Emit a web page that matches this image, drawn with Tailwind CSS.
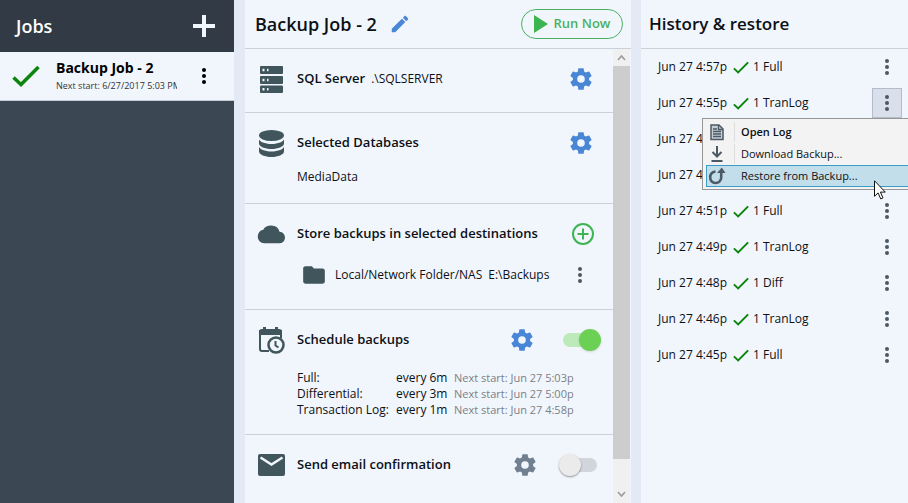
<!DOCTYPE html>
<html lang="en">
<head>
    <meta charset="UTF-8">
    <meta name="viewport" content="width=device-width, initial-scale=1.0">
    <title>Backup Job - 2</title>
    <script src="https://cdn.jsdelivr.net/npm/@tailwindcss/browser@4"></script>
</head>
<body class="flex h-screen overflow-hidden bg-[#e3e9f5] font-['Open_Sans','Noto_Sans',sans-serif] text-[12px] text-[#0c1014]">
    <!-- Shared icons -->
    <svg class="hidden" aria-hidden="true">
        <symbol id="gear" viewBox="0 0 24 24">
            <path fill="currentColor" d="M12 15.5A3.5 3.5 0 0 1 8.500 12 3.500 3.500 0 0 1 12 8.500a3.500 3.500 0 0 1 3.500 3.500 3.500 3.500 0 0 1-3.500 3.500m7.430-2.530c.04-.32.070-.64.070-.97s-.03-.66-.07-1l2.110-1.630c.19-.15.240-.42.120-.64l-2-3.460c-.12-.22-.39-.31-.61-.22l-2.490 1c-.52-.39-1.060-.73-1.690-.98l-.37-2.650A.506.506 0 0 0 14 2h-4c-.25 0-.46.180-.5.420l-.37 2.650c-.63.250-1.170.590-1.690.980l-2.490-1c-.22-.09-.49 0-.61.220l-2 3.460c-.13.220-.07.490.120.640L4.570 11c-.04.340-.07.670-.07 1s.03.650.070.970l-2.110 1.660c-.19.150-.25.420-.12.640l2 3.460c.12.220.390.300.610.220l2.490-1.010c.52.400 1.060.740 1.690.990l.37 2.650c.04.240.250.420.500.420h4c.25 0 .46-.18.500-.42l.37-2.650c.63-.26 1.170-.59 1.690-.99l2.490 1.010c.22.080.490 0 .61-.22l2-3.460c.12-.22.070-.49-.12-.64z"/>
        </symbol>
        <symbol id="dots" viewBox="0 0 6 18">
            <g fill="currentColor"><circle cx="3" cy="3" r="2"/><circle cx="3" cy="9" r="2"/><circle cx="3" cy="15" r="2"/></g>
        </symbol>
        <symbol id="check" viewBox="0 0 28 22">
            <path d="M1.500 12.500l7.500 7L26.500 2" fill="none" stroke="currentColor" stroke-width="3.500"/>
        </symbol>
    </svg>

    <!-- Sidebar -->
    <aside class="flex w-[234px] shrink-0 flex-col bg-[#3b4854] text-white">
        <header class="flex h-13 items-center justify-between bg-[#323a46] pr-[18px] pl-4">
            <h1 class="text-[18px] font-semibold">Jobs</h1>
            <button aria-label="Add job" class="size-6">
                <svg class="size-6" viewBox="0 0 24 24"><path d="M12 1v22M1 12h22" stroke="#f0f6fd" stroke-width="4"/></svg>
            </button>
        </header>
        <div class="flex h-[49px] items-center border-b border-[#c3cad3] bg-[#f1f6fd] pr-[27px] pl-3 text-black">
            <svg class="h-[22px] w-7 shrink-0 text-[#0b850b]"><use href="#check"/></svg>
            <a href="#" class="ml-4 w-[121px] overflow-hidden">
                <span class="block text-[14px] leading-4 font-bold">Backup Job - 2</span>
                <span class="mt-1 block text-[9px] leading-3 whitespace-nowrap text-[#333]">Next start: 6/27/2017 5:03 PM</span>
            </a>
            <button aria-label="Job menu" class="ml-auto"><svg class="h-[18px] w-[6px]"><use href="#dots"/></svg></button>
        </div>
    </aside>

    <!-- Job details -->
    <main class="mx-[11px] mr-[10px] flex min-w-0 flex-1 flex-col bg-[#f1f6fd]">
        <header class="flex h-[49px] shrink-0 items-center border-b border-[#cbd1da] pr-2 pl-[10px]">
            <h2 class="text-[18px] font-semibold">Backup Job - 2</h2>
            <button aria-label="Rename job" class="ml-3">
                <svg class="size-[22px]" viewBox="0 0 24 24"><path fill="#4a86d6" d="M20.710 7.040c.39-.39.390-1.040 0-1.410l-2.340-2.340c-.37-.39-1.020-.39-1.410 0l-1.840 1.830 3.750 3.750M3 17.250V21h3.750L17.810 9.930l-3.750-3.750z"/></svg>
            </button>
            <button class="ml-auto flex h-[30px] w-[102px] items-center justify-center gap-[6px] rounded-full border border-[#4bb062] text-[13px] font-semibold text-[#4bb062]">
                <svg class="h-[18px] w-[14px]" viewBox="0 0 14 18"><path d="M0 0l14 9-14 9z" fill="#3cb450"/></svg>
                Run Now
            </button>
        </header>

        <div class="flex min-h-0 flex-1">
            <div class="min-w-0 flex-1 overflow-hidden">
                <section class="border-b border-[#cbd1da] pt-4 pr-[19px] pb-[19px] pl-3">
                    <div class="flex h-7 items-center">
                        <svg class="size-7 shrink-0" viewBox="0 0 28 28"><g fill="#40555c"><rect x="3" y="1" width="23" height="8" rx="1"/><rect x="3" y="11" width="23" height="8" rx="1"/><rect x="3" y="20.500" width="23" height="7.500" rx="1"/></g><path d="M5.500 5h2m2.500 0h1.500M5.500 15h2m2.500 0h1.500M5.500 24.300h2m2.500 0h1.500" stroke="#f1f6fd" stroke-width="2.500"/></svg>
                        <h3 class="ml-3 text-[13px] font-semibold">SQL Server</h3>
                        <span class="ml-[6px]">.\SQLSERVER</span>
                        <button aria-label="SQL Server settings" class="ml-auto text-[#4a86d6]"><svg class="size-[26px]"><use href="#gear"/></svg></button>
                    </div>
                </section>

                <section class="border-b border-[#cbd1da] pt-4 pr-[19px] pb-4 pl-3">
                    <div class="flex h-7 items-center">
                        <svg class="size-7 shrink-0" viewBox="0 0 28 28"><g fill="#40555c"><ellipse cx="14.500" cy="6.500" rx="12.500" ry="5.500"/><path d="M2 10C2 12.500 8 15 14.500 15S27 12.500 27 10v4.500c0 3-6 5.500-12.500 5.500S2 17.500 2 14.500z"/><path d="M2 17.500c0 2.500 6 5 12.500 5s12.500-2.500 12.500-5v5c0 3-6 5.500-12.500 5.500S2 25.500 2 22.500z"/></g></svg>
                        <h3 class="ml-3 text-[13px] font-semibold">Selected Databases</h3>
                        <button aria-label="Database settings" class="ml-auto text-[#4a86d6]"><svg class="size-[26px]"><use href="#gear"/></svg></button>
                    </div>
                    <p class="mt-[10px] ml-10 leading-5">MediaData</p>
                </section>

                <section class="border-b border-[#cbd1da] pt-4 pr-[17px] pb-5 pl-3">
                    <div class="flex h-7 items-center">
                        <svg class="size-7 shrink-0" viewBox="0 0 24 24"><path fill="#40555c" d="M19.350 10.030A7.490 7.490 0 0 0 12 4.800C9.110 4.800 6.600 5.940 5.350 8.330A6.004 6.004 0 0 0 .700 14a5.500 5.500 0 0 0 5.500 6h12.800a4.900 4.900 0 0 0 5-5c0-2.640-2.050-4.780-4.650-4.970"/></svg>
                        <h3 class="ml-3 text-[13px] font-semibold">Store backups in selected destinations</h3>
                        <button aria-label="Add destination" class="ml-auto"><svg class="size-[26px]" viewBox="0 0 26 26"><g fill="none" stroke="#3fb455" stroke-width="2"><circle cx="13" cy="13" r="10"/><path d="M13 7.500v11M7.500 13h11"/></g></svg></button>
                    </div>
                    <div class="mt-[13px] ml-11 flex h-7 items-center">
                        <svg class="size-[26px] shrink-0" viewBox="0 0 24 24"><path fill="#40555c" d="M10 4H4c-1.110 0-2 .89-2 2v12a2 2 0 0 0 2 2h16a2 2 0 0 0 2-2V8c0-1.110-.9-2-2-2h-8z"/></svg>
                        <span class="ml-2">Local/Network Folder/NAS</span>
                        <span class="ml-[6px]">E:\Backups</span>
                        <button aria-label="Destination menu" class="mr-[13px] ml-auto text-[#4d5863]"><svg class="h-[18px] w-[6px]"><use href="#dots"/></svg></button>
                    </div>
                </section>

                <section class="border-b border-[#cbd1da] pt-4 pr-3 pb-4 pl-3">
                    <div class="flex h-7 items-center">
                        <svg class="size-7 shrink-0" viewBox="0 0 28 28"><g fill="none" stroke="#40555c" stroke-width="2"><path d="M12 25H5a2 2 0 0 1-2-2V6a2 2 0 0 1 2-2h17a2 2 0 0 1 2 2v6"/><path d="M7.500 1v5M19.500 1v5" stroke-width="3"/></g><path fill="#40555c" d="M2 4h23v5H2z"/><circle cx="19" cy="19" r="7.500" fill="#f1f6fd" stroke="#40555c" stroke-width="2.500"/><path d="M18.500 15v4.500l3 2" fill="none" stroke="#40555c" stroke-width="2"/></svg>
                        <label for="schedule" class="ml-3 text-[13px] font-semibold">Schedule backups</label>
                        <button aria-label="Schedule settings" class="ml-auto text-[#4a86d6]"><svg class="size-[26px]"><use href="#gear"/></svg></button>
                        <input id="schedule" type="checkbox" checked class="relative ml-7 h-[22px] w-[38px] appearance-none before:absolute before:top-1 before:left-0 before:h-[14px] before:w-[34px] before:rounded-full before:bg-[#bdeab9] after:absolute after:top-0 after:right-0 after:size-[22px] after:rounded-full after:bg-[#6bd053] after:shadow-sm">
                    </div>
                    <table class="mt-4 ml-10 leading-4">
                        <tr><td class="w-[99px]">Full:</td><td class="w-[58px]">every 6m</td><td class="text-[11px] whitespace-nowrap text-[#7c7f84]">Next start: Jun 27 5:03p</td></tr>
                        <tr><td>Differential:</td><td>every 3m</td><td class="text-[11px] whitespace-nowrap text-[#7c7f84]">Next start: Jun 27 5:00p</td></tr>
                        <tr><td class="whitespace-nowrap">Transaction Log:</td><td>every 1m</td><td class="text-[11px] whitespace-nowrap text-[#7c7f84]">Next start: Jun 27 4:58p</td></tr>
                    </table>
                </section>

                <section class="pt-4 pr-4 pl-3">
                    <div class="flex h-7 items-center">
                        <svg class="size-7 shrink-0" viewBox="0 0 28 28"><rect x="1" y="3" width="27" height="22" rx="2" fill="#40555c"/><path d="M3.500 6.500l11 7 11-7" fill="none" stroke="#f1f6fd" stroke-width="2.500"/></svg>
                        <label for="email" class="ml-3 text-[13px] font-semibold">Send email confirmation</label>
                        <button aria-label="Email settings" class="ml-auto text-[#708090]"><svg class="size-[26px]"><use href="#gear"/></svg></button>
                        <input id="email" type="checkbox" class="relative ml-[21px] h-[22px] w-[38px] appearance-none before:absolute before:top-1 before:right-0 before:h-[14px] before:w-[34px] before:rounded-full before:bg-[#d2d5db] after:absolute after:top-0 after:left-0 after:size-[22px] after:rounded-full after:bg-[#ebebeb] after:shadow-[0_1px_2px_rgba(0,0,0,0.4)]">
                    </div>
                </section>
            </div>

            <!-- Scrollbar -->
            <div class="mr-px flex w-[17px] shrink-0 flex-col bg-[#f0f0f0]" aria-hidden="true">
                <svg class="size-[17px] shrink-0" viewBox="0 0 17 17"><path d="M5 11l3.500-4L12 11" fill="none" stroke="#999" stroke-width="1.500"/></svg>
                <div class="flex-1 bg-[#cdcdcd]"></div>
                <div class="flex h-11 items-end"><svg class="size-[17px]" viewBox="0 0 17 17"><path d="M5 6l3.500 4L12 6" fill="none" stroke="#999" stroke-width="1.500"/></svg></div>
            </div>
        </div>
    </main>

    <!-- History -->
    <section class="relative w-[267px] shrink-0 overflow-hidden bg-[#f1f6fd]">
        <header class="flex h-[49px] items-center border-b border-[#cbd1da] pl-2">
            <h2 class="text-[17px] font-semibold">History &amp; restore</h2>
        </header>
        <ul class="text-[12px] [&_button]:ml-auto [&_button]:flex [&_button]:size-[30px] [&_button]:items-center [&_button]:justify-center [&_button]:text-[#4d5863] [&_li]:flex [&_li]:h-9 [&_li]:items-center [&_li]:pr-[6px] [&_li]:pl-[17px] [&_time]:w-[75px] [&_time]:whitespace-nowrap">
            <li><time>Jun 27 4:57p</time><svg class="mr-1 h-[13px] w-4 text-[#0b850b]"><use href="#check"/></svg>1 Full<button aria-label="Actions"><svg class="h-[18px] w-[6px]"><use href="#dots"/></svg></button></li>
            <li><time>Jun 27 4:55p</time><svg class="mr-1 h-[13px] w-4 text-[#0b850b]"><use href="#check"/></svg>1 TranLog<button aria-label="Actions" class="border border-[#b4bccb] bg-[#d9dfeb]"><svg class="h-[18px] w-[6px]"><use href="#dots"/></svg></button></li>
            <li><time>Jun 27 4</time></li>
            <li><time>Jun 27 4</time></li>
            <li><time>Jun 27 4:51p</time><svg class="mr-1 h-[13px] w-4 text-[#0b850b]"><use href="#check"/></svg>1 Full<button aria-label="Actions"><svg class="h-[18px] w-[6px]"><use href="#dots"/></svg></button></li>
            <li><time>Jun 27 4:49p</time><svg class="mr-1 h-[13px] w-4 text-[#0b850b]"><use href="#check"/></svg>1 TranLog<button aria-label="Actions"><svg class="h-[18px] w-[6px]"><use href="#dots"/></svg></button></li>
            <li><time>Jun 27 4:48p</time><svg class="mr-1 h-[13px] w-4 text-[#0b850b]"><use href="#check"/></svg>1 Diff<button aria-label="Actions"><svg class="h-[18px] w-[6px]"><use href="#dots"/></svg></button></li>
            <li><time>Jun 27 4:46p</time><svg class="mr-1 h-[13px] w-4 text-[#0b850b]"><use href="#check"/></svg>1 TranLog<button aria-label="Actions"><svg class="h-[18px] w-[6px]"><use href="#dots"/></svg></button></li>
            <li><time>Jun 27 4:45p</time><svg class="mr-1 h-[13px] w-4 text-[#0b850b]"><use href="#check"/></svg>1 Full<button aria-label="Actions"><svg class="h-[18px] w-[6px]"><use href="#dots"/></svg></button></li>
        </ul>

        <!-- Context menu -->
        <div role="menu" class="absolute top-[118px] -right-2 left-[61px] flex flex-col border border-[#979797] bg-[#f3f3f3] p-[2px] pl-[3px] text-[11px] [&_button]:flex [&_button]:h-[22px] [&_button]:items-center [&_button]:border [&_button]:pl-px [&_svg]:size-[18px] [&_span]:ml-2 [&_span]:flex [&_span]:h-full [&_span]:items-center [&_span]:border-l [&_span]:pl-[6px]">
            <button role="menuitem" class="border-transparent font-semibold">
                <svg viewBox="0 0 18 18"><path d="M3 2h8l4 4v10.500H3z" fill="#c5cdd3" stroke="#4b5a66" stroke-width="1.500"/><path d="M10.500 2v4.500H15M5 6h4M5 8.500h8M5 11h8M5 13.500h8" fill="none" stroke="#4b5a66" stroke-width="1.300"/></svg>
                <span class="border-[#dedede]">Open Log</span>
            </button>
            <button role="menuitem" class="border-transparent">
                <svg viewBox="0 0 18 18"><path d="M9 1v10M4.500 7L9 11.500 13.500 7M3.500 16h11" fill="none" stroke="#4b5a66" stroke-width="2"/></svg>
                <span class="border-[#dedede]">Download Backup...</span>
            </button>
            <button role="menuitem" class="border-[#3c9cc8] bg-[#c3deeb]">
                <svg viewBox="0 0 18 18"><path d="M7.500 4.500C4 5 2.200 7.500 2.200 10.300a5.500 5.500 0 0 0 11 .5V4" fill="none" stroke="#4b5a66" stroke-width="2.600"/><path d="M9 6l4.800-5.500L17.500 6z" fill="#4b5a66"/></svg>
                <span class="border-transparent">Restore from Backup...</span>
            </button>
        </div>

        <!-- Mouse pointer -->
        <svg class="absolute top-[180px] left-[233px] h-5 w-3" viewBox="0 0 12 20" aria-hidden="true"><path d="M.5.800v15.500l3.600-3.400 2.600 6 2.300-1-2.600-5.800h4.900z" fill="#fff" stroke="#111" stroke-width="1"/></svg>
    </section>
</body>
</html>
